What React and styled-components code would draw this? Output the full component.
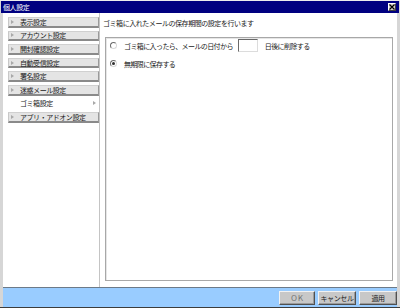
import React from "react";
import styled, { createGlobalStyle } from "styled-components";

const GlobalStyle = createGlobalStyle`
  html, body { margin: 0; padding: 0; width: 400px; height: 308px; overflow: hidden; background: #d4d4d4; }
  body { font-family: "Noto Sans CJK JP", "Noto Sans", sans-serif; }
  * { box-sizing: border-box; }
`;

const Window = styled.div`
  width: 400px;
  height: 308px;
  display: flex;
  flex-direction: column;
  background: #d6d6d6;
  border-top: 1px solid #ececec;
  border-bottom: 1px solid #3c3c3c;
`;

const TitleBar = styled.div`
  height: 12px;
  margin: 0 1px;
  background: #000080;
  display: flex;
  align-items: center;
  justify-content: space-between;
  padding: 0 3px 0 2px;
`;

const TitleText = styled.span`
  color: #ffffff;
  font-size: 7px;
  line-height: 1;
  letter-spacing: -0.4px;
`;

const CloseButton = styled.div`
  width: 8px;
  height: 8px;
  background: #d4d0c8;
  border-top: 1px solid #ffffff;
  border-left: 1px solid #ffffff;
  border-right: 1px solid #404040;
  border-bottom: 1px solid #404040;
  display: flex;
  align-items: center;
  justify-content: center;
`;

const Body = styled.div`
  flex: 1;
  margin: 0 3px;
  display: flex;
  background: #ffffff;
`;

const Sidebar = styled.div`
  width: 97px;
  border-right: 1px solid #c4c4c4;
  padding: 4px 0 0 5px;
  display: flex;
  flex-direction: column;
`;

const Item = styled.div`
  height: 10.6px;
  margin-bottom: 3px;
  display: flex;
  align-items: center;
  font-size: 7px;
  letter-spacing: -0.45px;
  color: #1a1a1a;
  white-space: nowrap;
  background: ${(p) => (p.$active ? "#ffffff" : "#e4e4e4")};
  border-top: 1px solid ${(p) => (p.$active ? "transparent" : "#d0d0d0")};
  border-left: 1px solid ${(p) => (p.$active ? "transparent" : "#c8c8c8")};
  border-right: 1px solid ${(p) => (p.$active ? "transparent" : "#9a9a9a")};
  border-bottom: 2px solid ${(p) => (p.$active ? "transparent" : "#8a8a8a")};
  padding-left: 2px;
  padding-right: 2px;
`;

const Arrow = styled.span`
  width: 0;
  height: 0;
  border-top: 2px solid transparent;
  border-bottom: 2px solid transparent;
  border-left: 3px solid #a8a8a8;
  flex: none;
  margin-right: ${(p) => (p.$after ? "0" : "6px")};
  margin-left: ${(p) => (p.$after ? "auto" : "0")};
  visibility: ${(p) => (p.$hidden ? "hidden" : "visible")};
`;

const Main = styled.div`
  flex: 1;
  display: flex;
  flex-direction: column;
  padding: 0 4px 6px 3px;
`;

const Description = styled.div`
  height: 24px;
  padding-bottom: 4px;
  display: flex;
  align-items: center;
  font-size: 7px;
  letter-spacing: -0.45px;
  color: #1a1a1a;
  white-space: nowrap;
`;

const GroupBox = styled.div`
  flex: 1;
  margin-left: 2px;
  border: 1px solid #a8a8a8;
  box-shadow: inset 1px 1px 0 #e6e6e6;
  padding: 1px 0 0 3.5px;
  display: flex;
  flex-direction: column;
  gap: 5px;
`;

const OptionRow = styled.div`
  height: 13px;
  display: flex;
  align-items: center;
  font-size: 7px;
  letter-spacing: -0.6px;
  color: #1a1a1a;
  white-space: nowrap;
`;

const Radio = styled.span`
  width: 7px;
  height: 7px;
  border-radius: 50%;
  flex: none;
  margin-right: 7.5px;
  background: #ffffff;
  border: 1px solid;
  border-color: #6a6a6a #d8d8d8 #d8d8d8 #6a6a6a;
  display: flex;
  align-items: center;
  justify-content: center;
  &::after {
    content: "";
    width: 3px;
    height: 3px;
    border-radius: 50%;
    background: ${(p) => (p.$checked ? "#303030" : "transparent")};
  }
`;

const DaysInput = styled.span`
  width: 20px;
  height: 13px;
  margin: 0 7px 0 5px;
  background: #ffffff;
  border-top: 1px solid #6a6a6a;
  border-left: 1px solid #6a6a6a;
  border-right: 1px solid #dcdcdc;
  border-bottom: 1px solid #dcdcdc;
  flex: none;
`;

const Footer = styled.div`
  height: 20px;
  margin: 0 3px;
  background: #99ccff;
  border-top: 1px solid #6c7a88;
  display: flex;
  align-items: center;
  justify-content: flex-end;
  padding-right: 0;
  gap: 3px;
`;

const Button = styled.div`
  width: ${(p) => p.$w}px;
  height: 14px;
  background: #c8c8c8;
  border-top: 1px solid #f2f2f2;
  border-left: 1px solid #f2f2f2;
  border-right: 1px solid #505050;
  border-bottom: 1px solid #505050;
  box-shadow: inset -1px -1px 0 #9a9a9a;
  display: flex;
  align-items: center;
  justify-content: center;
  font-size: 7px;
  letter-spacing: -0.4px;
  color: ${(p) => (p.$dim ? "#6a6a6a" : "#1a1a1a")};
  white-space: nowrap;
`;

const items = [
  "表示設定",
  "アカウント設定",
  "開封確認設定",
  "自動受信設定",
  "署名設定",
  "迷惑メール設定",
  "ゴミ箱設定",
  "アプリ・アドオン設定",
];

export default function App() {
  return (
    <>
      <GlobalStyle />
      <Window>
        <TitleBar>
          <TitleText>個人設定</TitleText>
          <CloseButton>
            <svg width="6" height="6" viewBox="0 0 6 6">
              <path d="M0.5 0.5 L5.5 5.5 M5.5 0.5 L0.5 5.5" stroke="#000" strokeWidth="1.2" />
            </svg>
          </CloseButton>
        </TitleBar>
        <Body>
          <Sidebar>
            {items.map((label, i) => {
              const active = i === 6;
              return (
                <Item key={label} $active={active}>
                  <Arrow $hidden={active} />
                  {label}
                  {active && <Arrow $after />}
                </Item>
              );
            })}
          </Sidebar>
          <Main>
            <Description>ゴミ箱に入れたメールの保存期間の設定を行います</Description>
            <GroupBox>
              <OptionRow>
                <Radio />
                ゴミ箱に入ったら、メールの日付から
                <DaysInput />
                日後に削除する
              </OptionRow>
              <OptionRow>
                <Radio $checked />
                無期限に保存する
              </OptionRow>
            </GroupBox>
          </Main>
        </Body>
        <Footer>
          <Button $w={36} $dim>ＯＫ</Button>
          <Button $w={38}>キャンセル</Button>
          <Button $w={38}>適用</Button>
        </Footer>
      </Window>
    </>
  );
}
